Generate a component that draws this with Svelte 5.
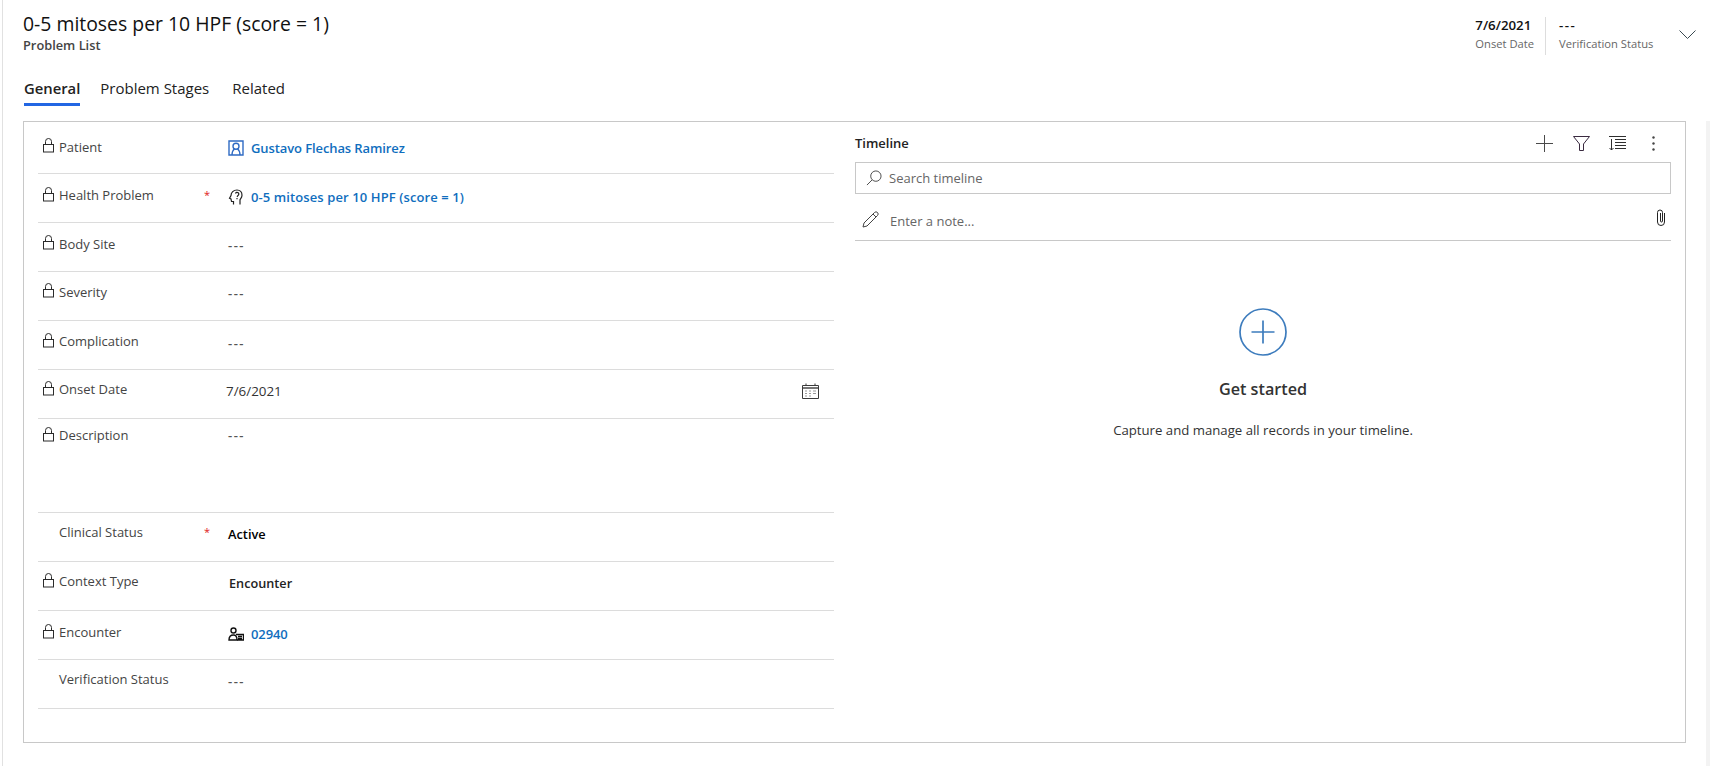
<script>
  const rows = [
    { label: 'Patient', lock: true, kind: 'link', icon: 'patient', value: 'Gustavo Flechas Ramirez', pad: 16, cls: 'first' },
    { label: 'Health Problem', lock: true, req: true, kind: 'link wide', icon: 'head', value: '0-5 mitoses per 10 HPF (score = 1)', pad: 13, cls: 'up' },
    { label: 'Body Site', lock: true, kind: 'dash', value: '---', pad: 12 },
    { label: 'Severity', lock: true, kind: 'dash', value: '---', pad: 11 },
    { label: 'Complication', lock: true, kind: 'dash', value: '---', pad: 12, cls: 'up' },
    { label: 'Onset Date', lock: true, kind: 'when', value: '7/6/2021', pad: 11, cls: 'up' },
    { label: 'Description', lock: true, kind: 'dash', value: '---', pad: 8, cls: 'tall up' },
    { label: 'Clinical Status', req: true, kind: 'strong', value: 'Active', pad: 11, cls: 'up' },
    { label: 'Context Type', lock: true, kind: 'plain', value: 'Encounter', pad: 11, cls: 'up' },
    { label: 'Encounter', lock: true, kind: 'link', icon: 'enc', value: '02940', pad: 13, cls: 'up' },
    { label: 'Verification Status', kind: 'dash', value: '---', pad: 11, cls: 'up' }
  ];
</script>

<div class="page">
  <header class="head">
    <div class="titles">
      <h1>0-5 mitoses per 10 HPF (score = 1)</h1>
      <div class="entity">Problem List</div>
    </div>
    <div class="summary">
      <div class="sum onset"><b>7/6/2021</b><span>Onset Date</span></div>
      <div class="sum status"><b class="dashes">---</b><span>Verification Status</span></div>
      <svg class="chev" width="17" height="9" viewBox="0 0 17 9" fill="none" stroke="#3b4a52" stroke-width="1"><path d="M.5.5l8 8 8-8"/></svg>
    </div>
  </header>

  <nav class="tabs">
    <div class="tab active">General</div>
    <div class="tab">Problem Stages</div>
    <div class="tab">Related</div>
  </nav>

  <div class="body">
    <section class="card">
      <div class="form">
        {#each rows as r}
          <div class="row {r.cls ?? ''}" style:padding-top="{r.pad}px">
            <div class="lock">
              {#if r.lock}
                <svg width="12" height="15" viewBox="0 0 12 15" fill="none" stroke="#2b2b2b" stroke-width="1"><rect x=".5" y="6.5" width="10" height="7.500"/><path d="M2.500 6.500V3.500a3 3 0 0 1 6 0v3"/></svg>
              {/if}
            </div>
            <div class="label">{r.label}</div>
            <div class="req">{r.req ? '*' : ''}</div>
            <div class="value {r.kind}">
              {#if r.icon === 'patient'}
                <svg class="ic" width="16" height="16" viewBox="0 0 16 16" fill="none" stroke="#2f6bc4" stroke-width="1.400"><path d="M4 15H1V1h14v14h-3"/><circle cx="8" cy="6.200" r="3"/><path d="M4 15c0-3.500 1-5 2.500-6.300M12 15c0-3.500-1-5-2.500-6.300M4 15h8"/></svg>
              {:else if r.icon === 'head'}
                <svg class="ic" width="16" height="16" viewBox="0 0 16 16" fill="none" stroke="#222" stroke-width="1.200"><path d="M5.500 15.500v-3H3.500l-.5-2.500-1.500-.8L3 6.500C3 3.500 5.500 1 9 1c3 0 5 2.300 5 5.200 0 2.300-1.500 3.500-2 4.500v4.800"/><path d="M7.500 4.500a1.700 1.700 0 1 1 2.500 2L9 7.800M9 9v1.200"/></svg>
              {:else if r.icon === 'enc'}
                <svg class="ic" width="16" height="16" viewBox="0 0 16 16" fill="none" stroke="#111" stroke-width="1.400"><circle cx="5.500" cy="4.500" r="2.500"/><path d="M1 14c0-3.200 2-5 4.500-5S9 10.800 9 14z"/><path d="M8 8.500h7.500V14H9M10 10.500h4M10 12.500h4"/></svg>
              {/if}
              <span>{r.value}</span>
              {#if r.kind === 'when'}
                <svg class="cal" width="17" height="16" viewBox="0 0 17 16" fill="none" stroke="#3b3b3b" stroke-width="1"><path d="M.5 2.500h16v13H.5z"/><path d="M.5 5h16" stroke-width="1.400"/><path d="M4 .5V3M13 .5V3"/><path d="M3 8h2M7 8h2M11 8h3M3 10.500h2M7 10.500h2M11 10.500h3M7 13h2M3 13h2" stroke="#999"/></svg>
              {/if}
            </div>
          </div>
        {/each}
      </div>

      <div class="timeline">
        <div class="tl-head">
          <div class="tl-title">Timeline</div>
          <div class="tl-actions">
            <svg class="plus" width="17" height="17" viewBox="0 0 17 17" stroke="#4a4a4a" fill="none"><path d="M0 8.500h17M8.500 0v17"/></svg>
            <svg width="17" height="15" viewBox="0 0 17 15" stroke="#3a2a40" fill="none"><path d="M.5.500h16L10.500 8v6.500h-4V8z"/></svg>
            <svg width="17" height="15" viewBox="0 0 17 15" stroke="#2f2f2f" fill="none"><path d="M0 .5h17M6 3.500h11M6 6.500h11M6 9.500h11M6 12.500h11M2.500 3v11M.5 12l2 2 2-2"/></svg>
            <svg class="dots" width="3" height="15" viewBox="0 0 3 15" fill="#444"><circle cx="1.500" cy="1.500" r="1.200"/><circle cx="1.500" cy="7.500" r="1.200"/><circle cx="1.500" cy="13.500" r="1.200"/></svg>
          </div>
        </div>
        <div class="search">
          <svg width="16" height="16" viewBox="0 0 17 17" fill="none" stroke="#444"><circle cx="10.500" cy="6.500" r="5.500"/><path d="M6.500 10.500L1 16"/></svg>
          <span>Search timeline</span>
        </div>
        <div class="note">
          <svg class="pen" width="17" height="17" viewBox="0 0 17 17" fill="none" stroke="#444"><path d="M1 16l1-4L12.500 1.500a1.800 1.800 0 0 1 3 3L5 15z"/><path d="M11 3l3 3"/></svg>
          <span>Enter a note...</span>
          <svg class="clip" width="10" height="17" viewBox="0 0 10 17" fill="none" stroke="#222"><path d="M8.500 4v9a3.500 3.500 0 0 1-7 0V3.500a2.500 2.500 0 0 1 5 0V12a1 1 0 0 1-2 0V4"/></svg>
        </div>
        <div class="empty">
          <svg width="48" height="48" viewBox="0 0 48 48" fill="none" stroke="#3d7cbd" stroke-width="1.700"><circle cx="24" cy="24" r="23"/><path d="M12.500 24h23M24 12.500v23"/></svg>
          <h2>Get started</h2>
          <p>Capture and manage all records in your timeline.</p>
        </div>
      </div>
    </section>
    <div class="rail"></div>
  </div>
</div>

<style>
  :global(body) { margin: 0; background: #fff; }
  .page {
    height: 766px; box-sizing: border-box; overflow: hidden;
    margin-left: 2px; border-left: 1px solid #e1e1e1; padding-left: 20px;
    font-family: "Open Sans", "Noto Sans", sans-serif; color: #333;
  }
  .head { display: flex; justify-content: space-between; height: 68px; box-sizing: border-box; padding-top: 10px; }
  h1 { margin: 0 0 1px; font-size: 19.400px; line-height: 27px; font-weight: 500; color: #111; }
  .entity { font-size: 12.800px; line-height: 15px; font-weight: 600; color: #444; }
  .summary { display: flex; align-items: flex-start; padding-top: 7px; padding-right: 14px; }
  .sum { display: flex; flex-direction: column; height: 38px; font-size: 11.200px; color: #666; line-height: 18px; }
  .sum b { font-size: 13.300px; font-weight: 600; color: #111; margin-top: -1px; }
  .sum span { margin-top: 1px; }
  .sum .dashes { letter-spacing: 1.500px; }
  .onset { padding-right: 11px; border-right: 1px solid #ddd; }
  .status { padding-left: 13px; width: 120px; }
  .chev { margin-top: 13px; }
  .tabs { display: flex; gap: 23px; height: 38px; box-sizing: border-box; font-size: 15px; color: #222; padding-top: 9px; padding-left: 1px; }
  .tab { height: 28px; line-height: 23px; }
  .active { font-weight: 600; font-size: 14.800px; border-bottom: 3px solid #2266e3; height: 26px; margin-right: -3px; }
  .body { display: flex; height: 645px; margin-top: 15px; }
  .card {
    width: 1663px; height: 622px; box-sizing: border-box; border: 1px solid #c8c8c8; background: #fff;
    display: flex; padding-left: 14px; padding-right: 14px;
  }
  .form { width: 796px; flex: none; }
  .row { display: flex; height: 49px; box-sizing: border-box; border-bottom: 1px solid #dcdcdc; font-size: 13px; }
  .first { height: 52px; }
  .tall { height: 94px; }
  .tall .value { margin-top: -2px; }
  .lock { width: 16px; padding-left: 5px; flex: none; }
  .lock svg { display: block; }
  .label { width: 145px; line-height: 18px; color: #444; }
  .up .label { margin-top: -1px; }
  .req { width: 22px; color: #e02020; line-height: 16px; font-size: 11px; }
  .value { flex: 1; display: flex; align-items: flex-start; line-height: 20px; padding-left: 2px; color: #333; }
  .ic { margin-right: 7px; margin-top: 2px; flex: none; }
  .link { color: #106ebe; font-weight: 600; letter-spacing: -.1px; }
  .wide { letter-spacing: .1px; }
  .strong { color: #000; font-weight: 600; font-size: 12.800px; }
  .plain { color: #222; font-weight: 600; font-size: 12.700px; padding-left: 3px; }
  .dash { font-weight: 600; color: #555; letter-spacing: 1.500px; }
  .when { padding-left: 0; font-size: 13.400px; }
  .cal { margin-left: auto; margin-right: 15px; margin-top: 2px; }
  .timeline { flex: 1; margin-left: 21px; font-size: 13px; }
  .tl-head { display: flex; justify-content: space-between; height: 40px; align-items: center; }
  .tl-title { font-size: 13px; font-weight: 600; color: #222; margin-top: 2px; }
  .tl-actions { display: flex; align-items: center; gap: 19px; padding-right: 16px; margin-top: 2px; }
  .plus { margin-right: 1px; }
  .dots { margin-left: 7px; }
  .search { height: 32px; box-sizing: border-box; border: 1px solid #c8c8c8; display: flex; align-items: center; gap: 7px; padding-left: 10px; color: #666; }
  .note { height: 47px; box-sizing: border-box; border-bottom: 1px solid #c8c8c8; display: flex; align-items: center; gap: 11px; padding-left: 7px; padding-top: 8px; color: #666; }
  .pen { margin-top: -4px; }
  .clip { margin-left: auto; margin-right: 5px; margin-top: -8px; }
  .empty { display: flex; flex-direction: column; align-items: center; padding-top: 67px; }
  h2 { margin: 21px 0 0; font-size: 16.200px; line-height: 24px; font-weight: 600; color: #333; }
  p { margin: 20px 0 0; font-size: 13.200px; line-height: 18px; color: #333; }
  .rail { width: 4px; margin-left: 20px; background: #f3f3f3; flex: none; }
</style>
